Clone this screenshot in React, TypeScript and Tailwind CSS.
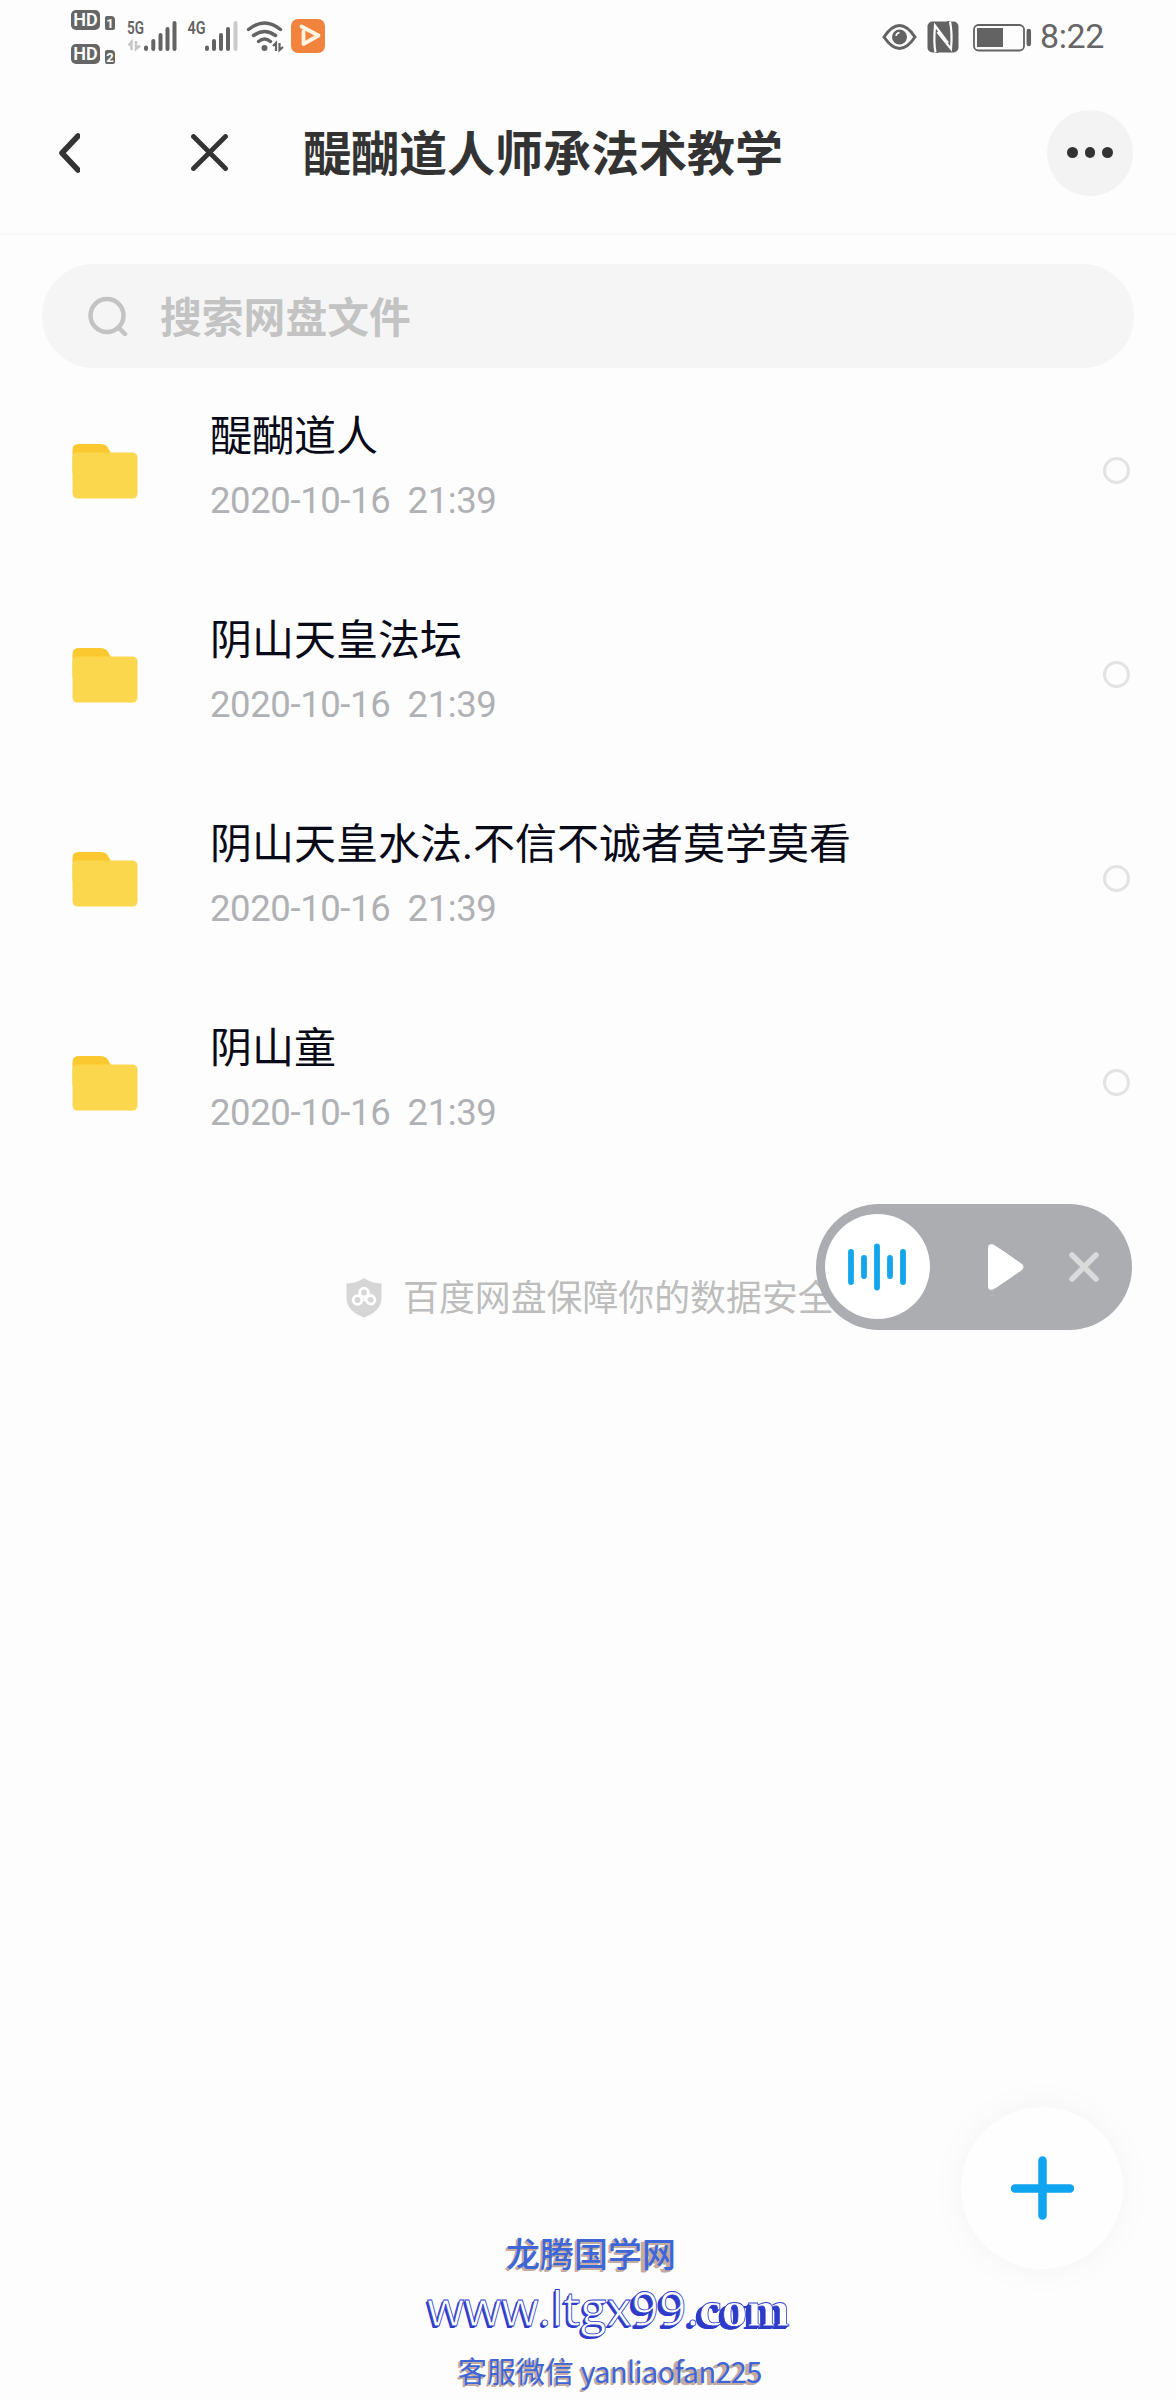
import React from 'react';

type Entry = {
  name: string;
  time: string;
};

const entries: Entry[] = [
  { name: '醍醐道人', time: '2020-10-16  21:39' },
  { name: '阴山天皇法坛', time: '2020-10-16  21:39' },
  { name: '阴山天皇水法.不信不诚者莫学莫看', time: '2020-10-16  21:39' },
  { name: '阴山童', time: '2020-10-16  21:39' },
];

const Hd = ({ n }: { n: string }) => (
  <div className="flex h-[20px] items-end gap-[5px] text-white">
    <span className="flex h-[20px] w-[29px] items-center justify-center rounded-[5px] bg-[#666] text-[18px] font-semibold leading-none">HD</span>
    <span className="flex h-[14px] w-[10px] items-center justify-center rounded-[2px] rounded-tr-[4px] bg-[#666] text-[13px] font-bold leading-none">{n}</span>
  </div>
);

function StatusBar() {
  return (
    <div className="flex h-[72px] items-start justify-between pl-[71px] pr-[72px] text-[#666]">
      <div className="flex">
        <div className="mt-[10px] flex flex-col gap-[14px]">
          <Hd n="1" />
          <Hd n="2" />
        </div>
        <svg className="ml-[9px]" width="212" height="72" viewBox="124 0 212 72" fill="none" stroke="#636363">
          <text x="127" y="34" fontSize="18" fontWeight="600" textLength="17" lengthAdjust="spacingAndGlyphs" fill="#636363" stroke="none">5G</text>
          <text x="187.500" y="34" fontSize="18" fontWeight="600" textLength="18" lengthAdjust="spacingAndGlyphs" fill="#636363" stroke="none">4G</text>
          <path d="M131.500 50V42l-3 3.500M136 41v8l4-3.500" stroke="#c6c6c6" strokeWidth="2.500" />
          <path d="M146 49v-1.500M153.300 49v-8M160.500 49v-14M167.500 49V29M174.500 49V23" strokeWidth="4" strokeLinecap="round" />
          <path d="M207 49v-1.500M214 49v-8M221 49v-14M228 49V29" strokeWidth="4" strokeLinecap="round" />
          <path d="M235.500 49V23" stroke="#cacaca" strokeWidth="4" strokeLinecap="round" />
          <path d="M248.500 29.500Q264.500 16.500 280.500 29.500M253.500 35.500Q264.500 27.500 275.500 35.500M258.500 41.500Q264.500 36.500 270.500 41.500" strokeWidth="3.500" strokeLinecap="round" />
          <circle cx="264.500" cy="48" r="3" fill="#636363" stroke="none" />
          <path d="M276 51v-8l-3 3M279.500 43v7l3.500-3" strokeWidth="2.200" />
          <rect x="291" y="19" width="34" height="34" rx="7" fill="#f2833d" stroke="none" />
          <path d="M303.500 31.500V44L318.500 35.500L301.500 26.500" stroke="#fff3e2" strokeWidth="3.800" strokeLinejoin="round" strokeLinecap="round" />
        </svg>
      </div>
      <div className="flex items-center">
        <svg width="150" height="72" viewBox="882 0 150 72" fill="none" stroke="#636363">
          <path d="M884 36Q899.500 13 915 36Q899.500 59 884 36Z" strokeWidth="3" />
          <circle cx="899.500" cy="36" r="7.500" fill="#636363" stroke="none" />
          <path d="M896 35q.5-3 3.500-3.500" stroke="#fdfdfd" strokeWidth="1.500" />
          <rect x="927.500" y="20.500" width="31" height="31" rx="5" fill="#636363" stroke="none" />
          <path d="M933 21L949 39V30Q949 24 947 20H950.500Q953.500 36 950.500 44L937 29V42Q937 49 938.500 52H935Q932.500 44 935 26Z" fill="#636363" stroke="none" />
          <path d="M935.500 51.500Q933.500 42 935 24.500L948 42M950 20.500Q952.500 32 951 48L937.500 31" stroke="#fdfdfd" strokeWidth="2.200" />
          <rect x="974" y="24" width="50" height="25.500" rx="4.500" strokeWidth="1.800" />
          <path d="M977 27h26v19h-26z" fill="#636363" stroke="none" />
          <path d="M1028.800 30v13" strokeWidth="4.500" strokeLinecap="round" />
        </svg>
        <span className="ml-[8px] w-[64px] whitespace-nowrap text-[34px] leading-[73px] tracking-[-0.400px]">8:22</span>
      </div>
    </div>
  );
}

function Header() {
  return (
    <header className="flex h-[163px] items-center border-b-2 border-[#f8f8f8] pl-[58px] pr-[43px]">
      <svg width="22" height="40" viewBox="0 0 22 40" fill="none" stroke="#333" strokeWidth="5.500" strokeLinecap="round" strokeLinejoin="round">
        <path d="M20 3L4 20l16 17" />
      </svg>
      <svg className="ml-[111px]" width="37" height="37" viewBox="0 0 37 37" stroke="#333" strokeWidth="4.800" strokeLinecap="round">
        <path d="M2.500 2.500l32 32M34.500 2.500l-32 32" />
      </svg>
      <h1 className="ml-[75px] flex-1 whitespace-nowrap pt-[5px] text-[48px] font-bold leading-none text-[#333]">醍醐道人师承法术教学</h1>
      <button className="flex h-[86px] w-[86px] items-center justify-center gap-[7px] rounded-full bg-[#f3f3f3]">
        <i className="h-[10.500px] w-[10.500px] rounded-full bg-[#333]" />
        <i className="h-[10.500px] w-[10.500px] rounded-full bg-[#333]" />
        <i className="h-[10.500px] w-[10.500px] rounded-full bg-[#333]" />
      </button>
    </header>
  );
}

const Folder = () => (
  <svg className="mt-px" width="66" height="56" viewBox="0 0 66 56">
    <path d="M.5 30V7Q.5 1 6.500 1H28Q33 1 35.500 4L40 12V30Z" fill="#fbc830" />
    <path d="M.5 15Q.5 9.500 6 9.500H60Q65.500 9.500 65.500 15V50Q65.500 55.500 60 55.500H6Q.5 55.500 .5 50Z" fill="#fbd74d" />
  </svg>
);

function Row({ name, time }: Entry) {
  return (
    <li className="flex h-[204px] items-center pl-[72px] pr-[46px]">
      <Folder />
      <div className="-mt-[2px] ml-[72px] flex-1">
        <div className="whitespace-nowrap text-[42px] leading-[60px] text-[#090a18]">{name}</div>
        <div className="mt-[4px] whitespace-pre text-[36.500px] leading-[60px] tracking-[-0.400px] text-[#b0b1b5]">{time}</div>
      </div>
      <span className="h-[27px] w-[27px] rounded-full border-[3px] border-[#e3e3e3]" />
    </li>
  );
}

function Player() {
  return (
    <div className="absolute left-[816px] top-[1204px] flex h-[126px] w-[316px] items-center rounded-full bg-[#acadb0] pl-[9px]">
      <span className="-mt-px flex h-[105px] w-[105px] items-center justify-center rounded-full bg-white">
        <svg className="-ml-px" width="60" height="50" viewBox="0 0 60 50" stroke="#14a5ea" strokeWidth="5.800" strokeLinecap="round">
          <path d="M4 10v30M17 16v18M30 4.500v41M43 16v18M56 10v30" />
        </svg>
      </span>
      <svg className="ml-[58px]" width="36" height="46" viewBox="0 0 36 46" fill="#fff">
        <path d="M0 4Q0-1 5 .5Q7 1 34 20Q37 23 34 26Q7 45 5 45.500Q0 47 0 42Z" />
      </svg>
      <svg className="ml-[45px]" width="30" height="30" viewBox="0 0 30 30" stroke="#dadada" strokeWidth="5.500" strokeLinecap="round">
        <path d="M3 3l24 24M27 3L3 27" />
      </svg>
    </div>
  );
}

export default function App() {
  return (
    <div className="relative h-[2400px] w-[1176px] overflow-hidden bg-[#fdfdfd] font-[Roboto,'Noto_Sans_CJK_SC',sans-serif]">
      <StatusBar />
      <Header />
      <div className="mx-[42px] mt-[29px] flex h-[104px] items-center rounded-full bg-[#f5f5f5] pl-[46px] text-[#c3c3c3]">
        <svg width="40" height="40" viewBox="0 0 40 40" fill="none" stroke="#c3c3c3" strokeWidth="4.500" strokeLinecap="round">
          <circle cx="19" cy="19.500" r="16.500" />
          <path d="M31 32l6 6" />
        </svg>
        <span className="ml-[32px] pt-[5px] text-[41.800px] font-bold leading-none">搜索网盘文件</span>
      </div>
      <ul>
        {entries.map((e) => (
          <Row key={e.name} {...e} />
        ))}
      </ul>
      <footer className="mt-[88px] flex items-center pl-[346px] text-[#bdbdbd]">
        <svg className="-mt-[2px]" width="36" height="40" viewBox="0 0 36 40">
          <path d="M18 0Q25 5 35.500 5.500V20Q35.500 33 18 39.500Q.5 33 .5 20V5.500Q11 5 18 0Z" fill="#d6d6d6" />
          <g fill="none" stroke="#fff" strokeWidth="2.800">
            <circle cx="18" cy="14.500" r="4.300" />
            <circle cx="11.500" cy="22" r="4.300" />
            <path d="M18 19l4 6q6 3 7-3q-1-6-7-4l-4 5" strokeLinejoin="round" />
          </g>
        </svg>
        <span className="ml-[21px] whitespace-nowrap pt-px text-[35.900px] leading-[52px]">百度网盘保障你的数据安全</span>
      </footer>
      <Player />

      <button className="absolute left-[961px] top-[2107px] flex h-[162px] w-[162px] items-center justify-center rounded-full bg-[#fefefe] shadow-[0_0_36px_rgba(0,30,30,0.045)]">
        <svg width="64" height="64" viewBox="0 0 64 64" stroke="#0ea4f0" strokeWidth="8.500" strokeLinecap="round">
          <path d="M32.500 4.500v55M5 32.500h55" />
        </svg>
      </button>

      {/* site watermark */}
      <div className="absolute left-[420px] top-[2223px] w-[380px] whitespace-nowrap font-['Noto_Sans_CJK_SC',sans-serif]">
        <div className="pl-[86px] text-[34px] font-medium leading-[60px] text-[#3f66d6] [text-shadow:-1px_1px_#c4ab9f,-2px_2px_#c4ab9f]">
          龙腾国学<span className="[text-shadow:-1px_1px_#c4ab9f,-2px_2px_#c4ab9f,-3px_2px_#c4ab9f,-4px_2px_#c4ab9f]">网</span>
        </div>
        <div className="h-[61px] pl-[7px] font-['Open_Sans',sans-serif] text-[48px] leading-[50px] text-white [-webkit-text-stroke:0.800px_#2d3cc8] [text-shadow:-1px_1px_#2d3cc8,-2px_2px_#2d3cc8]">
          www.ltgx
          <span className="[text-shadow:-1px_1px_#2d3cc8,-2px_2px_#2d3cc8,-3px_3px_#2d3cc8,-4px_3px_#2d3cc8]">99.</span>
          <span className="font-['Liberation_Serif',serif] text-[51px] font-bold leading-none [text-shadow:-1px_1px_#2d3cc8,-2px_2px_#2d3cc8,-3px_3px_#2d3cc8,-4px_3px_#2d3cc8,-5px_3px_#2d3cc8]">com</span>
        </div>
        <div className="pl-[38px] text-[29px] leading-[52px] text-[#3f66d6] [text-shadow:-1px_1px_#c4ab9f,-2px_2px_#c4ab9f]">
          客服微信 <span className="tracking-[-0.650px]">yanliao</span><span className="tracking-[-0.650px] [text-shadow:-1px_1px_#c4ab9f,-2px_2px_#c4ab9f,-3px_2px_#c4ab9f,-4px_2px_#c4ab9f]">fan225</span>
        </div>
      </div>
    </div>
  );
}
